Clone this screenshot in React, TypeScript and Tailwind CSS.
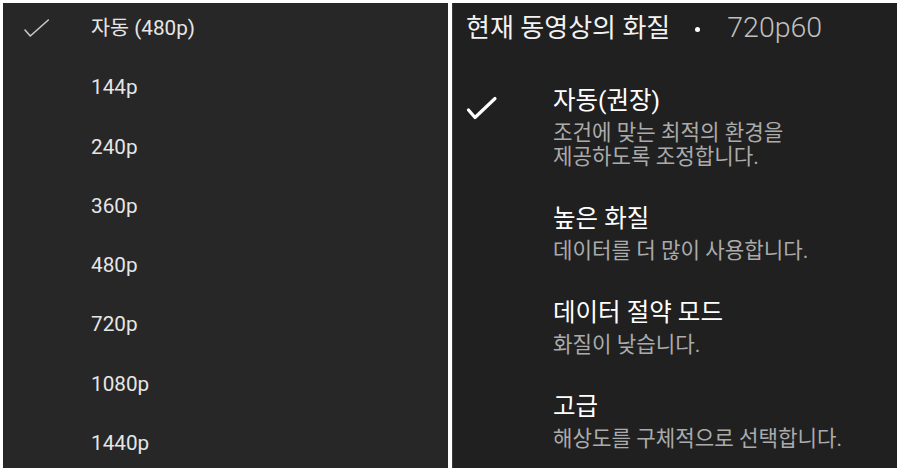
import React from "react";

const font = { fontFamily: "Roboto, 'Noto Sans CJK KR', sans-serif" };

const leftItems = ["자동 (480p)", "144p", "240p", "360p", "480p", "720p", "1080p", "1440p"];

const rightItems: { title: string; sub: string[]; checked?: boolean }[] = [
  { title: "자동(권장)", sub: ["조건에 맞는 최적의 환경을", "제공하도록 조정합니다."], checked: true },
  { title: "높은 화질", sub: ["데이터를 더 많이 사용합니다."] },
  { title: "데이터 절약 모드", sub: ["화질이 낮습니다."] },
  { title: "고급", sub: ["해상도를 구체적으로 선택합니다."] },
];

function ThinCheck() {
  return (
    <svg width="26" height="20" viewBox="0 0 26 20" fill="none">
      <polyline points="1,12 6.3,18 24.3,2" stroke="#c8c8c8" strokeWidth="1.6" strokeLinecap="round" strokeLinejoin="round" />
    </svg>
  );
}

function BoldCheck() {
  return (
    <svg width="32" height="24" viewBox="0 0 32 24" fill="none">
      <polyline points="2.5,14 9,21.5 29,2.5" stroke="#ffffff" strokeWidth="3.2" strokeLinecap="round" strokeLinejoin="round" />
    </svg>
  );
}

export default function App() {
  return (
    <div className="w-[900px] h-[471px] bg-white flex p-[3px] gap-[4px]" style={font}>
      <div className="w-[445px] h-full bg-[#272727] pt-[13px] pl-[21px] flex flex-col gap-[35.3px]">
        {leftItems.map((t, i) => (
          <div key={t} className="flex items-center h-[24px]">
            <div className="w-[67px] flex items-center">
              {i === 0 ? <ThinCheck /> : null}
            </div>
            <span className="text-[20.7px] leading-[24px] text-[#e6e6e6]">{t}</span>
          </div>
        ))}
      </div>
      <div className="flex-1 h-full bg-[#202020] border-l border-[#3a3a3a] pt-[9.5px] pl-[13px] flex flex-col">
        <div className="flex items-center h-[30px]">
          <span className="text-[26px] leading-[30px] text-[#f2f2f2]">현재 동영상의 화질</span>
          <span className="ml-[25px] w-[5px] h-[5px] rounded-full bg-white mt-[4px]" />
          <span className="ml-[27px] text-[28.5px] leading-[30px] font-light text-[#c0c0c0]">720p60</span>
        </div>
        <div className="mt-[43.5px] flex flex-col gap-[35px]">
          {rightItems.map((it) => (
            <div key={it.title} className="flex">
              <div className="w-[87px] pt-[10px]">{it.checked ? <BoldCheck /> : null}</div>
              <div className="flex flex-col">
                <span className="text-[24.5px] leading-[30px] text-white">{it.title}</span>
                <div className="mt-[5px] flex flex-col">
                  {it.sub.map((s) => (
                    <span key={s} className="text-[21.2px] leading-[24px] text-[#ababab]">{s}</span>
                  ))}
                </div>
              </div>
            </div>
          ))}
        </div>
      </div>
    </div>
  );
}
